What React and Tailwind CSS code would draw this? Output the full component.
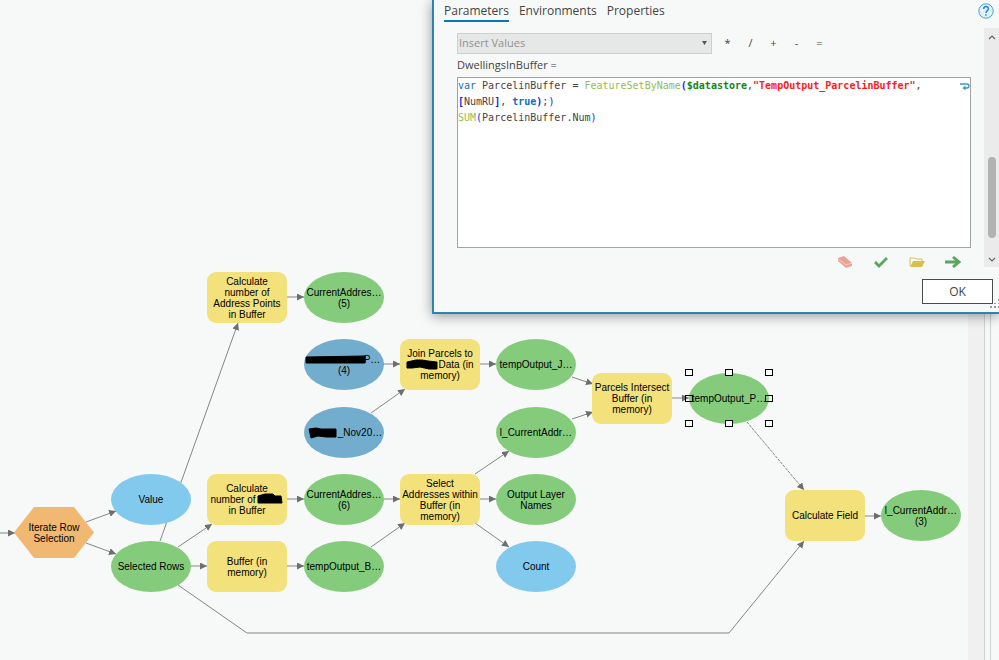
import React, { useState } from "react";

// Model nodes, placed on the free canvas by their top left corner
const nodes = [
  { id: "iterate", kind: "iterator", x: 14, y: 507, lines: ["Iterate Row", "Selection"] },
  { id: "value", kind: "value", x: 111, y: 474, lines: ["Value"] },
  { id: "rows", kind: "derived", x: 111, y: 541, lines: ["Selected Rows"] },
  { id: "calc-points", kind: "tool", x: 207, y: 272, lines: ["Calculate", "number of", "Address Points", "in Buffer"] },
  { id: "current5", kind: "derived", x: 304, y: 272, lines: ["CurrentAddres…", "(5)"] },
  { id: "input4", kind: "data", x: 304, y: 339, lines: ["P…", "(4)"], align: "pl-14", mark: "M2 18 L61 17 L61 24 L2 24 Z" },
  { id: "nov", kind: "data", x: 304, y: 407, lines: ["_Nov20…"], align: "pl-8", mark: "M5 22 L12 21 L17 22 L32 22 L32 30 L22 30 L14 29 L7 31 Z" },
  { id: "calc-number", kind: "tool", x: 207, y: 474, lines: ["Calculate", "number of", "in Buffer"], align: "pr-7", mark: "M51 22 L58 20 L66 20 L68 22 L74 22 L75 29 L51 29 Z" },
  { id: "buffer", kind: "tool", x: 207, y: 541, lines: ["Buffer (in", "memory)"] },
  { id: "current6", kind: "derived", x: 304, y: 474, lines: ["CurrentAddres…", "(6)"] },
  { id: "temp-b", kind: "derived", x: 304, y: 541, lines: ["tempOutput_B…"] },
  { id: "join", kind: "tool", x: 400, y: 339, lines: ["Join Parcels to", "Data (in", "memory)"], align: "pl-8", mark: "M7 23 L16 21 L22 21 L28 22 L37 23 L37 30 L29 30 L20 28 L12 29 L7 29 Z" },
  { id: "select", kind: "tool", x: 400, y: 474, lines: ["Select", "Addresses within", "Buffer (in", "memory)"] },
  { id: "temp-j", kind: "derived", x: 496, y: 339, lines: ["tempOutput_J…"] },
  { id: "l-current", kind: "derived", x: 496, y: 407, lines: ["l_CurrentAddr…"] },
  { id: "layer-names", kind: "derived", x: 496, y: 474, lines: ["Output Layer", "Names"] },
  { id: "count", kind: "value", x: 496, y: 541, lines: ["Count"] },
  { id: "intersect", kind: "tool", x: 592, y: 373, lines: ["Parcels Intersect", "Buffer (in", "memory)"] },
  { id: "temp-p", kind: "derived", x: 689, y: 373, lines: ["tempOutput_P…"], selected: true },
  { id: "calc-field", kind: "tool", x: 785, y: 490, lines: ["Calculate Field"] },
  { id: "l-current3", kind: "derived", x: 881, y: 490, lines: ["l_CurrentAddr…", "(3)"] },
];

const kinds = {
  tool: "rounded-[9px] bg-[#f3e17b]",
  derived: "rounded-[50%] bg-[#84cc7c]",
  data: "rounded-[50%] bg-[#72adce]",
  value: "rounded-[50%] bg-[#82c9ee]",
  iterator: "bg-[#f1b872] [clip-path:polygon(25%_0,75%_0,100%_50%,75%_100%,25%_100%,0_50%)]",
};

const edges = [
  "M0 533 H15",
  "M86 522 L116 511",
  "M86 543 L116 554",
  "M160 541 L238 323",
  "M178 547 L212 524",
  "M191 566 H207",
  "M287 297 H304",
  "M287 499 H304",
  "M287 566 H304",
  "M383 364 H400",
  "M371 413 L405 389",
  "M383 499 H400",
  "M371 547 L405 523",
  "M480 364 H496",
  "M475 474 L509 451",
  "M480 499 H496",
  "M475 523 L509 547",
  "M572 377 L593 384",
  "M572 419 L593 412",
  "M672 398 H689",
  "M865 516 H881",
  "M178 585 L247 633 H729 L804 541",
];

const handles = [
  "left-[-4px] top-[-4px]",
  "left-[36px] top-[-4px]",
  "left-[76px] top-[-4px]",
  "left-[-4px] top-[22px]",
  "left-[76px] top-[22px]",
  "left-[-4px] top-[47px]",
  "left-[36px] top-[47px]",
  "left-[76px] top-[47px]",
];

const Node = ({ node }) => (
  <div className="absolute h-[51px] w-20" style={{ left: node.x, top: node.y }}>
    <div
      className={`flex h-full w-full flex-col items-center justify-center text-[10px] leading-[11px] whitespace-nowrap text-black ${kinds[node.kind]}`}>
      {node.lines.map((line, i) => {
        // the covered line is the first one in data nodes, the middle one in tools
        const covered = node.kind === "data" ? i === 0 : i === 1;
        return (
          <span key={line} className={node.align && covered ? node.align : ""}>
            {line}
          </span>
        );
      })}
    </div>
    {node.mark && (
      <svg className="absolute inset-0" width="80" height="51" aria-hidden="true">
        <path d={node.mark} stroke="#000" strokeLinejoin="round" />
      </svg>
    )}
    {node.selected &&
      handles.map((pos) => (
        <span key={pos} className={`absolute h-[7px] w-2 border border-black ${pos} ${pos.includes("top-[22px]") ? "" : "bg-white"}`}></span>
      ))}
  </div>
);

const Connectors = () => (
  <svg className="absolute inset-0 h-full w-full" fill="none" stroke="#858585" aria-hidden="true">
    <defs>
      <marker id="arrow" markerWidth="8" markerHeight="8" refX="7" refY="3.5" orient="auto" markerUnits="userSpaceOnUse">
        <path d="M0 0 L7 3.5 L0 7 Z" fill="#6e6e6e" stroke="none" />
      </marker>
    </defs>
    {edges.map((d) => (
      <path key={d} d={d} markerEnd="url(#arrow)" />
    ))}
    <path d="M747 422 L804 490" strokeDasharray="3 1" markerEnd="url(#arrow)" />
  </svg>
);

const EraserIcon = () => (
  <svg width="16" height="12" viewBox="0 0 16 12">
    <path d="M1 2 L7 0 L15 7 V10 L9 12 L1 5 Z" fill="#e9a298" />
    <path d="M1 3 L9 9 L15 7" stroke="#f8dcd7" strokeWidth="0.7" fill="none" />
  </svg>
);

const CheckIcon = () => (
  <svg width="16" height="12" viewBox="0 0 16 12">
    <path d="M2 6 L6 10 L14 2" stroke="#5aa65a" strokeWidth="2.8" fill="none" />
  </svg>
);

const FolderIcon = () => (
  <svg width="16" height="12" viewBox="0 0 16 12">
    <path d="M1 10 V2 H6 L7 3 H13 V5" stroke="#d9c04a" fill="none" />
    <path d="M4 5 H16 L13 11 H1 Z" fill="#d9c04a" />
  </svg>
);

const ArrowIcon = () => (
  <svg width="16" height="12" viewBox="0 0 16 12">
    <path d="M0 6 H13 M8 1 L14 6 L8 11" stroke="#5aa65a" strokeWidth="2.8" fill="none" />
  </svg>
);

const actions = [
  { label: "Clear", Icon: EraserIcon },
  { label: "Validate", Icon: CheckIcon },
  { label: "Import", Icon: FolderIcon },
  { label: "Export", Icon: ArrowIcon },
];

const Chevron = ({ up }) => (
  <svg width="8" height="5" viewBox="0 0 8 5" fill="none" stroke="#666" strokeWidth="1.2">
    <path d={up ? "M1 4 L4 1 L7 4" : "M1 1 L4 4 L7 1"} />
  </svg>
);

const Expression = () => (
  <div className="relative h-[171px] border border-[#a0a4a3] bg-white">
    <div
      role="textbox"
      aria-multiline="true"
      aria-labelledby="field-label"
      contentEditable
      suppressContentEditableWarning
      spellCheck={false}
      className="h-full font-['DejaVu_Sans_Mono',monospace] text-[10px] leading-4 whitespace-pre text-[#444] outline-none">
      <div>
        <span className="text-[#0f70c0]">var</span> ParcelinBuffer = <span className="text-[#93bd50]">FeatureSetByName</span>
        <b className="text-[#2222ff]">(</b>
        <b className="text-[#158515]">$datastore</b>,
        <b className="text-[#ff1a1a]">"TempOutput_ParcelinBuffer"</b>,
      </div>
      <div>
        <b className="text-[#2222ff]">[</b>NumRU<b className="text-[#2222ff]">]</b>, <b className="text-[#0f70c0]">true</b>
        <b className="text-[#2222ff]">)</b>;<span className="text-[#2222ff]">)</span>
      </div>
      <div>
        <span className="text-[#93bd50]">SUM</span>
        <span className="text-[#2222ff]">(</span>ParcelinBuffer.Num<span className="text-[#2222ff]">)</span>
      </div>
    </div>
    <svg className="absolute top-1 right-0" width="10" height="9" viewBox="0 0 10 9" fill="none" stroke="#3d96bd" strokeWidth="1.3" aria-hidden="true">
      <path d="M0 2 H7 Q9 2 9 4 Q9 6 7 6 H4" />
      <path d="M5.5 3.5 L2.5 6 L5.5 8.5 Z" fill="#3d96bd" stroke="none" />
    </svg>
  </div>
);

const ToolDialog = () => {
  const [tab, setTab] = useState("Parameters");

  return (
    <div
      role="dialog"
      aria-label="Calculate Field"
      className="absolute top-0 right-0 w-[567px] border-b-2 border-l-2 border-[#2b84b5] bg-[#f7f9f9] font-['Open_Sans',sans-serif] text-[11px] text-[#444] shadow-[0_2px_12px_rgba(0,0,0,0.4)]">
      <div className="flex h-7 items-start justify-between pl-[10px]">
        <div className="flex gap-[10px]" role="tablist">
          {["Parameters", "Environments", "Properties"].map((name) => (
            <button
              key={name}
              role="tab"
              aria-selected={tab === name}
              onClick={() => setTab(name)}
              className={`h-[22px] border-b-2 text-xs leading-[22px] ${
                tab === name ? "border-[#0079c1] font-medium" : "border-transparent"
              }`}>
              {name}
            </button>
          ))}
        </div>
        <button aria-label="Help" className="mt-[3px] mr-[5px]">
          <svg width="16" height="16" viewBox="0 0 16 16" fill="none" stroke="#4a9fd0">
            <circle cx="8" cy="8" r="7.2" fill="#e2f1fb" />
            <path d="M5.7 6 C5.7 2.8 10.4 2.8 10.4 5.8 C10.4 7.6 8 7.8 8 10 M8 11.3 V12.8" stroke="#2588c8" strokeWidth="1.5" />
          </svg>
        </button>
      </div>

      <div className="flex h-[239px]">
        <div className="min-w-0 flex-1 pt-1 pr-[13px] pl-[23px]">
          <div className="flex h-[22px] items-center">
            <div className="relative w-[255px]">
              <select
                aria-label="Insert Values"
                className="h-[21px] w-full appearance-none border border-[#cdcfcf] bg-[#e6e7e7] pl-px text-[#929292]">
                <option>Insert Values</option>
              </select>
              <svg className="pointer-events-none absolute top-2 right-[5px]" width="5" height="4" aria-hidden="true">
                <path d="M0 0 H5 L2.5 4 Z" fill="#555" />
              </svg>
            </div>
            <div className="ml-1 flex pt-px">
              {["*", "/", "+", "-", "="].map((op) => (
                <button key={op} className="w-[23px] text-center">
                  {op}
                </button>
              ))}
            </div>
          </div>
          <div id="field-label" className="h-[23px] leading-[22px]">
            DwellingsInBuffer =
          </div>
          <Expression />
          <div className="flex justify-end gap-5 pt-2 pr-[10px]">
            {actions.map(({ label, Icon }) => (
              <button key={label} aria-label={label}>
                <Icon />
              </button>
            ))}
          </div>
        </div>
        {/* Scrollbar */}
        <div className="flex w-[15px] flex-col items-center bg-[#ebebeb] pt-[7px] pb-[5px]">
          <Chevron up />
          <div className="min-h-0 flex-1"></div>
          <div className="mb-[19px] h-[81px] w-2 rounded-full bg-[#b1b2b2]"></div>
          <Chevron />
        </div>
      </div>

      <div className="flex h-[45px] items-start justify-end pt-3 pr-[6px]">
        <button className="h-[25px] w-[71px] border border-[#4b4b4b] bg-white text-xs">OK</button>
      </div>
      <svg className="absolute right-0 bottom-1" width="9" height="9" fill="#999" aria-hidden="true">
        <path d="M8 0h1v2h-1z M4 4h2v1h-2z M8 4h1v1h-1z M0 7h2v2h-2z M4 7h2v2h-2z M8 7h1v2h-1z" />
      </svg>
    </div>
  );
};

const App = () => {
  return (
    <div className="relative flex min-h-screen overflow-hidden bg-[#f7f9f9] font-['Liberation_Sans',Arial,sans-serif]">
      <main className="relative flex-1">
        <Connectors />
        {nodes.map((node) => (
          <Node key={node.id} node={node} />
        ))}
      </main>
      {/* Canvas scrollbar track and pane splitter */}
      <div className="flex w-[31px]">
        <div className="w-4 bg-[#f0f0f0]"></div>
        <div className="w-[7px] border-x border-[#d0d2d2]"></div>
      </div>
      <ToolDialog />
    </div>
  );
};

export default App;
